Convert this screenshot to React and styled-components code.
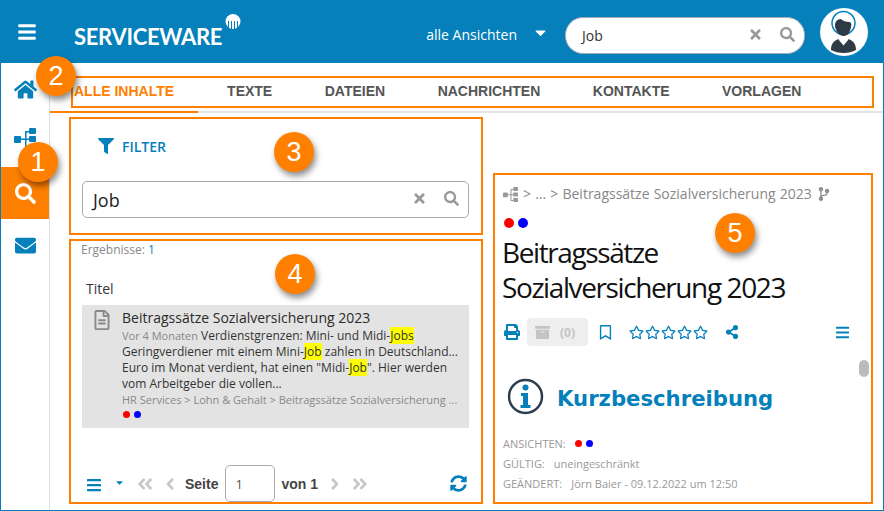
import React from "react";
import styled, { createGlobalStyle } from "styled-components";
import {
  FaBars,
  FaHome,
  FaSearch,
  FaEnvelope,
  FaTimes,
  FaFilter,
  FaCaretDown,
  FaRegFileAlt,
  FaAngleDoubleLeft,
  FaAngleLeft,
  FaAngleRight,
  FaAngleDoubleRight,
  FaSyncAlt,
  FaPrint,
  FaArchive,
  FaRegBookmark,
  FaRegStar,
  FaShareAlt,
  FaCodeBranch,
} from "react-icons/fa";

const BLUE = "#0580bb";
const ORANGE = "#ff8000";

const GlobalStyle = createGlobalStyle`
  html, body {
    margin: 0;
    padding: 0;
    background: #fff;
    font-family: "Open Sans", "Liberation Sans", sans-serif;
  }
  * { box-sizing: border-box; }
`;

const TreeIcon = ({ size = 22, color = BLUE }) => (
  <svg width={size} height={size} viewBox="0 0 22 22" fill={color}>
    <rect x="0" y="8" width="7" height="7" rx="1" />
    <rect x="15" y="0" width="7" height="6" rx="1" />
    <rect x="15" y="8" width="7" height="6" rx="1" />
    <rect x="15" y="16" width="7" height="6" rx="1" />
    <path d="M6 10.500h5V3h4v1.500h-2.500v6H15v1.500h-2.500v7H15v1.500h-4V12H6z" />
  </svg>
);

const LogoMark = () => (
  <svg width="16" height="15" viewBox="0 0 16 15">
    <circle cx="8" cy="7.500" r="7.500" fill="#fff" />
    <path d="M3.500 7v8M6.500 7v8M9.500 7v8M12.500 7v8" stroke={BLUE} strokeWidth="1" />
  </svg>
);

const AvatarFigure = () => (
  <svg width="48" height="48" viewBox="0 0 48 48">
    <circle cx="24" cy="24" r="24" fill="#fff" />
    <circle cx="23.500" cy="15" r="11.500" fill="none" stroke={BLUE} strokeWidth="1.500" />
    <path
      d="M15 17c0-3 2-6 6-6 1 1.500 4 3 9 3 1.500 1 1.500 3 1 5-.5 4-3 9-7.500 9-4 0-7-4-7.500-7-.7-.5-1-2-1-4z"
      fill="#2e3a46"
    />
    <path
      d="M11 42c0-6 2.500-9 7.500-11l5 4.500 5-4.500c5 2 7.500 5 7.500 11-3.500 2-8 3-12.500 3s-9-1-12.500-3z"
      fill="#2e3a46"
    />
    <path d="M19.500 30.500l4 3.500 4-3.500 1 1-5 6-5-6z" fill="#fff" />
  </svg>
);

const InfoIcon = () => (
  <svg width="37" height="37" viewBox="0 0 37 37">
    <circle cx="18.500" cy="18.500" r="16.500" fill="none" stroke="#2e3d4c" strokeWidth="2.500" />
    <circle cx="18.500" cy="9.500" r="3" fill={BLUE} />
    <path d="M14 15h7v12h2.500v3h-10v-3H16v-9h-2z" fill={BLUE} />
  </svg>
);

const Page = styled.div`
  position: relative;
  width: 884px;
  height: 511px;
  border: 1px solid ${BLUE};
  border-top: 0;
  display: flex;
  flex-direction: column;
  overflow: hidden;
  background: #fff;
`;

const TopBar = styled.header`
  height: 63px;
  flex: none;
  background: ${BLUE};
  display: flex;
  align-items: center;
  color: #fff;
  padding: 0 15px 0 16px;
`;

const MenuButton = styled.div`
  display: flex;
  font-size: 20px;
  margin-right: 37px;
`;

const Logo = styled.div`
  display: flex;
  align-items: flex-start;
  font-family: "Lato", "Open Sans", sans-serif;
  font-weight: 700;
  font-size: 22px;
  letter-spacing: -0.3px;
  line-height: 24px;
  margin-top: 11px;
  svg {
    margin: -11px 0 0 3px;
  }
`;

const ViewSelect = styled.div`
  display: flex;
  align-items: center;
  margin-left: auto;
  font-size: 14px;
  margin-top: 5px;
  svg {
    margin: -3px 0 0 15px;
    font-size: 17px;
  }
`;

const HeaderSearch = styled.div`
  width: 240px;
  height: 37px;
  margin: 7px 0 0 16px;
  border-radius: 18px;
  border: 1px solid #aab;
  background: #fff;
  display: flex;
  align-items: center;
  padding: 0 9px 0 16px;
  color: #333;
  font-size: 14px;
`;

const ClearIcon = styled(FaTimes)`
  color: #999;
  font-size: ${(p) => p.$size}px;
  margin-left: auto;
  margin-top: -2px;
`;

const SearchIcon = styled(FaSearch)`
  color: #999;
  font-size: ${(p) => p.$size}px;
  margin-left: 17px;
  margin-top: -2px;
`;

const Avatar = styled.div`
  display: flex;
  margin-left: 15px;
`;

const Body = styled.div`
  flex: 1;
  display: flex;
  min-height: 0;
`;

const Sidebar = styled.nav`
  width: 49px;
  flex: none;
  border-right: 1px solid #ddd;
`;

const SideItem = styled.div`
  height: 52px;
  display: flex;
  align-items: center;
  justify-content: center;
  font-size: ${(p) => p.$size || 21}px;
  padding-bottom: ${(p) => p.$lift || 0}px;
  color: ${(p) => (p.$active ? "#fff" : BLUE)};
  background: ${(p) => (p.$active ? ORANGE : "transparent")};
`;

const Main = styled.main`
  flex: 1;
  display: flex;
  flex-direction: column;
  min-width: 0;
`;

const TabBar = styled.div`
  position: relative;
  height: 50px;
  flex: none;
  border-bottom: 2px solid #e4e4e4;
  display: flex;
  padding-top: 13px;
`;

const TabFrame = styled.div`
  position: absolute;
  left: 21px;
  top: 13px;
  width: 803px;
  height: 32px;
  border: 2px solid ${ORANGE};
  pointer-events: none;
`;

const Tab = styled.div`
  height: 37px;
  margin-right: ${(p) => (p.$active ? 5 : 4.500)}px;
  padding: 7px 24px 0;
  font-family: "Liberation Sans", Arial, sans-serif;
  font-weight: 700;
  font-size: 14px;
  line-height: 16px;
  color: ${(p) => (p.$active ? ORANGE : "#555")};
  border-bottom: 2px solid ${(p) => (p.$active ? ORANGE : "transparent")};
`;

const Content = styled.div`
  flex: 1;
  display: grid;
  grid-template-columns: 414px 380px;
  column-gap: 10px;
  padding: 4px 0 6px 19px;
  min-height: 0;
`;

const LeftColumn = styled.div`
  display: flex;
  flex-direction: column;
  gap: 4px;
  min-height: 0;
`;

const Panel = styled.section`
  border: 2px solid ${ORANGE};
  position: relative;
`;

const FilterPanel = styled(Panel)`
  height: 118px;
  padding: 15px 12px 0 11px;
`;

const FilterRow = styled.div`
  display: flex;
  align-items: center;
  height: 24px;
  margin-left: 16px;
  color: ${BLUE};
  font-size: 14px;
  font-weight: 600;
  gap: 8px;
  svg {
    font-size: 16px;
  }
`;

const BigSearch = styled.div`
  height: 37px;
  margin-top: 23px;
  border: 1px solid #aaa;
  border-radius: 5px;
  display: flex;
  align-items: center;
  padding: 0 9px 0 10px;
  font-size: 18px;
  color: #222;
`;

const ResultPanel = styled(Panel)`
  flex: 1;
  padding: 2px 12px 0 10px;
  display: flex;
  flex-direction: column;
  min-height: 0;
`;

const ResultCount = styled.div`
  font-size: 12px;
  line-height: 14px;
  color: #888;
  span {
    color: ${BLUE};
  }
`;

const ColumnHead = styled.div`
  margin: 23px 0 0 5px;
  font-size: 14px;
  line-height: 18px;
  height: 25px;
  color: #333;
`;

const ResultCard = styled.article`
  height: 123px;
  background: #e3e3e3;
  display: flex;
  margin-left: 1px;
  padding: 3px 0 0 10px;
`;

const FileIcon = styled(FaRegFileAlt)`
  flex: none;
  font-size: 20px;
  color: #8a8a8a;
  margin: 2px 10px 0 0;
`;

const ResultBody = styled.div`
  min-width: 0;
  width: 340px;
`;

const ResultTitle = styled.div`
  font-size: 14px;
  line-height: 20px;
  color: #2a2a2a;
  white-space: nowrap;
`;

const Snippet = styled.div`
  font-size: 12px;
  line-height: 16px;
  color: #333;
  white-space: nowrap;
  mark {
    background: #ffff00;
    color: inherit;
  }
`;

const Muted = styled.span`
  font-size: 11px;
  color: #888;
`;

const Trail = styled.div`
  font-size: 11px;
  line-height: 16px;
  color: #888;
  white-space: nowrap;
`;

const Dots = styled.div`
  display: flex;
  align-items: center;
  gap: ${(p) => p.$gap}px;
  height: ${(p) => p.$height}px;
  margin: ${(p) => p.$margin || "0"};
`;

const Dot = styled.i`
  display: block;
  width: ${(p) => p.$size}px;
  height: ${(p) => p.$size}px;
  border-radius: 50%;
  background: ${(p) => p.$color};
`;

const Pager = styled.div`
  margin-top: auto;
  height: 37px;
  display: flex;
  align-items: center;
  font-family: "Liberation Sans", Arial, sans-serif;
  font-weight: 700;
  font-size: 14px;
  color: #444;
  padding-left: 5px;
`;

const PagerBars = styled(FaBars)`
  color: ${BLUE};
  font-size: 16px;
  margin-top: 3px;
`;

const PagerCaret = styled(FaCaretDown)`
  color: ${BLUE};
  font-size: 11px;
  margin: 0 11px 3px 12px;
`;

const PagerArrow = styled.span`
  display: flex;
  color: #c8c8c8;
  font-size: 18px;
  margin: 0 ${(p) => p.$right || 0}px 0 ${(p) => p.$left || 0}px;
`;

const PageInput = styled.div`
  width: 50px;
  height: 37px;
  margin: 0 6px 0 7px;
  border: 1px solid #aaa;
  border-radius: 5px;
  display: flex;
  align-items: center;
  padding-left: 9px;
  font-family: "Open Sans", sans-serif;
  font-weight: 400;
  font-size: 13px;
  color: #555;
`;

const Refresh = styled(FaSyncAlt)`
  color: ${BLUE};
  font-size: 17px;
  margin-left: auto;
  margin-right: 2px;
`;

const DetailPanel = styled(Panel)`
  margin-top: 56px;
  padding: 9px 8px 0;
  overflow: hidden;
`;

const Crumbs = styled.div`
  display: flex;
  align-items: center;
  font-size: 14px;
  line-height: 20px;
  color: #888;
  gap: 5px;
  word-spacing: 0.500px;
  white-space: nowrap;
`;

const DetailTitle = styled.h1`
  margin: 3px 0 0 -1px;
  font-size: 28px;
  font-weight: 400;
  line-height: 35px;
  letter-spacing: -1.400px;
  color: #111;
`;

const Actions = styled.div`
  display: flex;
  align-items: center;
  height: 28px;
  margin-top: 13px;
  padding-left: 1px;
  color: ${BLUE};
`;

const ArchiveButton = styled.div`
  width: 61px;
  height: 28px;
  margin: 0 10px 0 7px;
  background: #eee;
  border-radius: 4px;
  display: flex;
  align-items: center;
  padding-left: 8px;
  gap: 10px;
  color: #c4c4c4;
  font-size: 12px;
  font-weight: 700;
`;

const Stars = styled.div`
  display: flex;
  gap: 1px;
  margin: 0 17px 0 16px;
  font-size: 15px;
`;

const EndBars = styled(FaBars)`
  margin-left: auto;
  margin-right: 13px;
  font-size: 15px;
`;

const SectionHead = styled.div`
  display: flex;
  align-items: center;
  gap: 13px;
  margin: 32px 0 18px 4px;
  height: 37px;
  font-family: "DejaVu Sans", Verdana, sans-serif;
  font-weight: 700;
  font-size: 21.200px;
  color: ${BLUE};
`;

const SectionTitle = styled.span`
  margin-top: 3px;
`;

const MetaRow = styled.div`
  display: flex;
  align-items: center;
  gap: 9px;
  height: 20px;
  font-size: 11px;
  color: #999;
  white-space: nowrap;
`;

const ScrollThumb = styled.div`
  position: absolute;
  top: 185px;
  right: 2px;
  width: 10px;
  height: 17px;
  border-radius: 5px;
  background: #bbb;
`;

const Badge = styled.div`
  position: absolute;
  left: ${(p) => p.$x - 20}px;
  top: ${(p) => p.$y - 20}px;
  width: 40px;
  height: 40px;
  border-radius: 50%;
  background: ${ORANGE};
  color: #fff;
  display: flex;
  align-items: center;
  justify-content: center;
  font-family: "Liberation Sans", Arial, sans-serif;
  font-size: 27px;
  box-shadow: 2px 4px 6px rgba(0, 0, 0, 0.45);
`;

const ViewDots = ({ size = 7, gap = 4, height = 12, margin }) => (
  <Dots $gap={gap} $height={height} $margin={margin}>
    <Dot $size={size} $color="#ff0000" />
    <Dot $size={size} $color="#0000ff" />
  </Dots>
);

const tabs = ["ALLE INHALTE", "TEXTE", "DATEIEN", "NACHRICHTEN", "KONTAKTE", "VORLAGEN"];
const badges = [
  { n: 1, x: 37, y: 162 },
  { n: 2, x: 55, y: 76 },
  { n: 3, x: 293, y: 152 },
  { n: 4, x: 294, y: 274 },
  { n: 5, x: 734, y: 233 },
];

export default function App() {
  return (
    <Page>
      <GlobalStyle />
      <TopBar>
        <MenuButton>
          <FaBars />
        </MenuButton>
        <Logo>
          SERVICEWARE
          <LogoMark />
        </Logo>
        <ViewSelect>
          alle Ansichten
          <FaCaretDown />
        </ViewSelect>
        <HeaderSearch>
          Job
          <ClearIcon $size={15} />
          <SearchIcon $size={15} />
        </HeaderSearch>
        <Avatar>
          <AvatarFigure />
        </Avatar>
      </TopBar>
      <Body>
        <Sidebar>
          <SideItem $size={23}>
            <FaHome />
          </SideItem>
          <SideItem $lift={4}>
            <TreeIcon />
          </SideItem>
          <SideItem $active>
            <FaSearch />
          </SideItem>
          <SideItem>
            <FaEnvelope />
          </SideItem>
        </Sidebar>
        <Main>
          <TabBar>
            {tabs.map((t, i) => (
              <Tab key={t} $active={i === 0}>
                {t}
              </Tab>
            ))}
            <TabFrame />
          </TabBar>
          <Content>
            <LeftColumn>
              <FilterPanel>
                <FilterRow>
                  <FaFilter />
                  FILTER
                </FilterRow>
                <BigSearch>
                  Job
                  <ClearIcon $size={15} />
                  <SearchIcon $size={15} />
                </BigSearch>
              </FilterPanel>
              <ResultPanel>
                <ResultCount>
                  Ergebnisse: <span>1</span>
                </ResultCount>
                <ColumnHead>Titel</ColumnHead>
                <ResultCard>
                  <FileIcon />
                  <ResultBody>
                    <ResultTitle>Beitragssätze Sozialversicherung 2023</ResultTitle>
                    <Snippet>
                      <Muted>Vor 4 Monaten</Muted> Verdienstgrenzen: Mini- und Midi-<mark>Jobs</mark>
                    </Snippet>
                    <Snippet>
                      Geringverdiener mit einem Mini-<mark>Job</mark> zahlen in Deutschland...
                    </Snippet>
                    <Snippet>
                      Euro im Monat verdient, hat einen "Midi-<mark>Job</mark>". Hier werden
                    </Snippet>
                    <Snippet>vom Arbeitgeber die vollen...</Snippet>
                    <Trail>HR Services &gt; Lohn &amp; Gehalt &gt; Beitragssätze Sozialversicherung ...</Trail>
                    <ViewDots margin="0 0 0 1px" />
                  </ResultBody>
                </ResultCard>
                <Pager>
                  <PagerBars />
                  <PagerCaret />
                  <PagerArrow $right={7}>
                    <FaAngleDoubleLeft />
                  </PagerArrow>
                  <PagerArrow $right={6}>
                    <FaAngleLeft />
                  </PagerArrow>
                  Seite
                  <PageInput>1</PageInput>
                  von 1
                  <PagerArrow $left={8} $right={7}>
                    <FaAngleRight />
                  </PagerArrow>
                  <PagerArrow>
                    <FaAngleDoubleRight />
                  </PagerArrow>
                  <Refresh />
                </Pager>
              </ResultPanel>
            </LeftColumn>
            <DetailPanel>
              <Crumbs>
                <TreeIcon size={15} color="#999" />
                &gt; ... &gt; Beitragssätze Sozialversicherung 2023
                <FaCodeBranch size={14} />
              </Crumbs>
              <ViewDots size={10} height={18} margin="10px 0 0 1px" />
              <DetailTitle>
                Beitragssätze
                <br />
                Sozialversicherung 2023
              </DetailTitle>
              <Actions>
                <FaPrint size={16} />
                <ArchiveButton>
                  <FaArchive size={15} />
                  (0)
                </ArchiveButton>
                <FaRegBookmark size={15} />
                <Stars>
                  <FaRegStar />
                  <FaRegStar />
                  <FaRegStar />
                  <FaRegStar />
                  <FaRegStar />
                </Stars>
                <FaShareAlt size={14} />
                <EndBars />
              </Actions>
              <SectionHead>
                <InfoIcon />
                <SectionTitle>Kurzbeschreibung</SectionTitle>
              </SectionHead>
              <MetaRow>
                <span>ANSICHTEN:</span>
                <ViewDots />
              </MetaRow>
              <MetaRow>
                <span>GÜLTIG:</span>
                <span>uneingeschränkt</span>
              </MetaRow>
              <MetaRow>
                <span>GEÄNDERT:</span>
                <span>Jörn Baier - 09.12.2022 um 12:50</span>
              </MetaRow>
              <ScrollThumb />
            </DetailPanel>
          </Content>
        </Main>
      </Body>
      {badges.map((b) => (
        <Badge key={b.n} $x={b.x} $y={b.y}>
          {b.n}
        </Badge>
      ))}
    </Page>
  );
}
